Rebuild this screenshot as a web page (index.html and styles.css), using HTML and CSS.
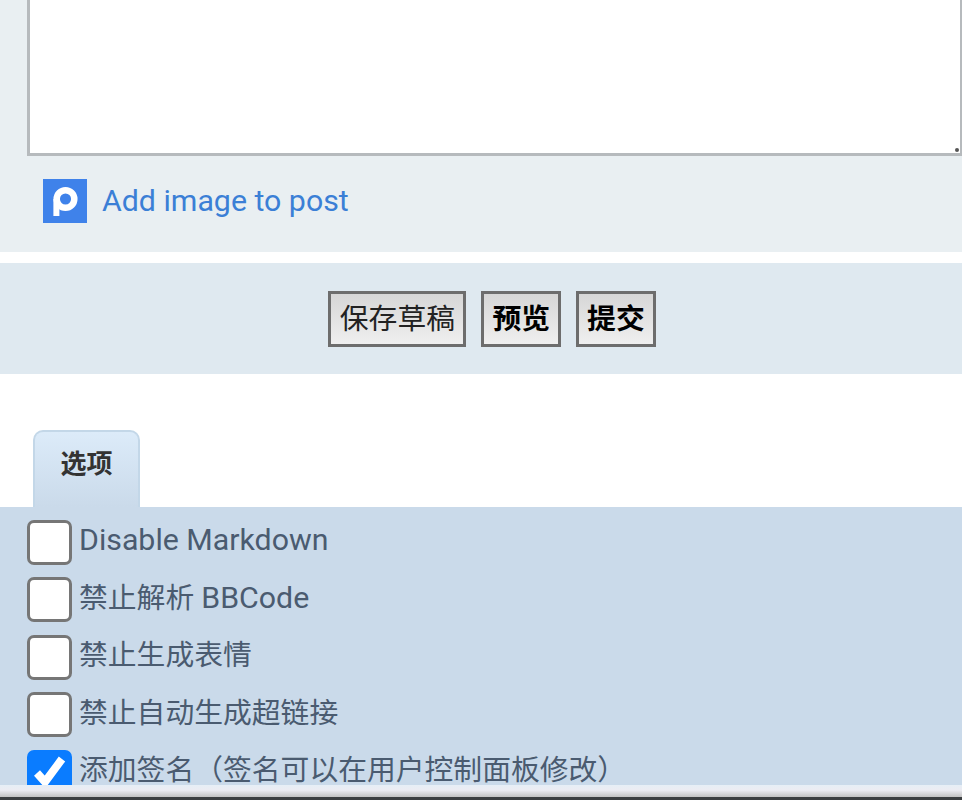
FILE: index.html
```html
<!DOCTYPE html>
<html lang="zh-CN">
  <head>
    <meta charset="UTF-8" />
    <meta name="viewport" content="width=device-width, initial-scale=1.0" />
    <title>发表帖子</title>
    <link rel="stylesheet" href="styles.css">
  </head>
  <body>
    <div class="page">
      <section class="editor">
        <div class="message-wrap">
          <textarea class="message"></textarea>
          <span class="grip"></span>
        </div>
        <a class="add-image" href="#">
          <svg class="postimage-icon" viewBox="0 0 44 44" aria-hidden="true">
            <rect width="44" height="44" fill="#3f82ea" />
            <circle cx="22.5" cy="20" r="8.8" fill="none" stroke="#fff" stroke-width="6.5" />
            <rect x="10.4" y="20" width="6" height="17" fill="#fff" />
          </svg>
          Add image to post
        </a>
      </section>

      <div class="submit-buttons">
        <button type="button" class="btn">保存草稿</button>
        <button type="button" class="btn btn-bold">预览</button>
        <button type="button" class="btn btn-bold">提交</button>
      </div>

      <div class="tabs">
        <div class="tab">选项</div>
      </div>

      <section class="options">
        <label class="option"><input type="checkbox" /><span class="latin-row"><b>Disable Markdown</b></span></label>
        <label class="option"><input type="checkbox" /><span>禁止解析 <b>BBCode</b></span></label>
        <label class="option"><input type="checkbox" /><span>禁止生成表情</span></label>
        <label class="option"><input type="checkbox" /><span>禁止自动生成超链接</span></label>
        <label class="option"><input type="checkbox" checked /><span>添加签名（签名可以在用户控制面板修改）</span></label>
      </section>

      <div class="bottom-bar"></div>
    </div>
  </body>
</html>
```

FILE: styles.css
```css
html,
body {
  margin: 0;
  height: 800px;
  overflow: hidden;
  background-color: #fff;
}

body {
  font-family: Roboto, "Noto Sans CJK SC", sans-serif;
}

.page {
  display: flex;
  flex-direction: column;
  height: 800px;
}

.editor {
  height: 252px;
  padding-left: 27px;
  box-sizing: border-box;
  background-color: #e9eff2;
}

.message-wrap {
  position: relative;
  height: 156px;
  overflow: hidden;
}

/* the top edge of the textarea is scrolled off the page */
.message {
  display: block;
  width: 100%;
  height: 160px;
  box-sizing: border-box;
  margin: -4px 0 0;
  padding: 0;
  background-color: #fff;
  border: 3px solid #b6babd;
  border-right-width: 2px;
  border-radius: 0;
  outline: none;
  resize: none;
}

.grip {
  position: absolute;
  right: 3px;
  bottom: 4px;
  width: 4px;
  height: 4px;
  border-radius: 50%;
  background-color: #555;
}

.add-image {
  display: flex;
  align-items: center;
  gap: 15px;
  margin: 23px 0 0 16px;
  font-size: 30.3px;
  line-height: 44px;
  color: #3b7fd6;
  text-decoration: none;
}

.postimage-icon {
  width: 44px;
  height: 44px;
}

.submit-buttons {
  display: flex;
  justify-content: center;
  align-items: center;
  gap: 15px;
  height: 111px;
  margin-top: 11px;
  padding-left: 22px;
  background-color: #dfe9f0;
}

.btn {
  height: 56px;
  padding: 0 8.5px 4px;
  font-family: Roboto, "Noto Sans CJK SC", sans-serif;
  font-size: 28.8px;
  color: #222;
  background: linear-gradient(#d6d6d6, #efefef);
  border: 3px solid #6d6d6d;
  border-radius: 0;
}

.btn-bold {
  padding: 0 8px 4px;
  font-weight: bold;
  color: #000;
}

.tabs {
  display: flex;
  height: 77px;
  margin-top: 56px;
  padding-left: 33px;
}

.tab {
  width: 107px;
  box-sizing: border-box;
  padding-top: 14px;
  font-size: 26px;
  line-height: 36px;
  font-weight: bold;
  text-align: center;
  color: #333;
  background: linear-gradient(#dcebf9, #cadaea);
  border: 2px solid #c3d7e8;
  border-bottom: none;
  border-radius: 10px 10px 0 0;
}

.options {
  flex: none;
  height: 278px;
  overflow: hidden;
  padding: 13px 0 0 27px;
  box-sizing: border-box;
  background-color: #cadaea;
}

.option {
  display: flex;
  align-items: center;
  gap: 7px;
  height: 45px;
  margin-bottom: 12.4px;
  font-size: 28.8px;
  line-height: 40px;
  color: #4a5b70;
}

.option span {
  position: relative;
  top: -2px;
}

.option .latin-row {
  top: -3px;
}

/* latin text runs a little larger than the CJK text */
.option b {
  font-weight: normal;
  font-size: 30.3px;
}

.option input {
  appearance: none;
  flex: none;
  width: 45px;
  height: 45px;
  margin: 0;
  box-sizing: border-box;
  background-color: #fff;
  border: 3px solid #767676;
  border-radius: 7px;
}

.option input:checked {
  border: none;
  background: #0a7cff url("data:image/svg+xml,%3Csvg xmlns='http://www.w3.org/2000/svg' viewBox='0 0 45 45'%3E%3Cpath d='M10 23l8 9L35 9' fill='none' stroke='%23fff' stroke-width='8'/%3E%3C/svg%3E") center / 100% no-repeat;
}

.bottom-bar {
  flex: none;
  height: 15px;
  background: linear-gradient(#e6eef6 0, #ececf2 35%, #c4c4c4 78%, #3c3f41 80%, #3c3f41 100%);
}
```
